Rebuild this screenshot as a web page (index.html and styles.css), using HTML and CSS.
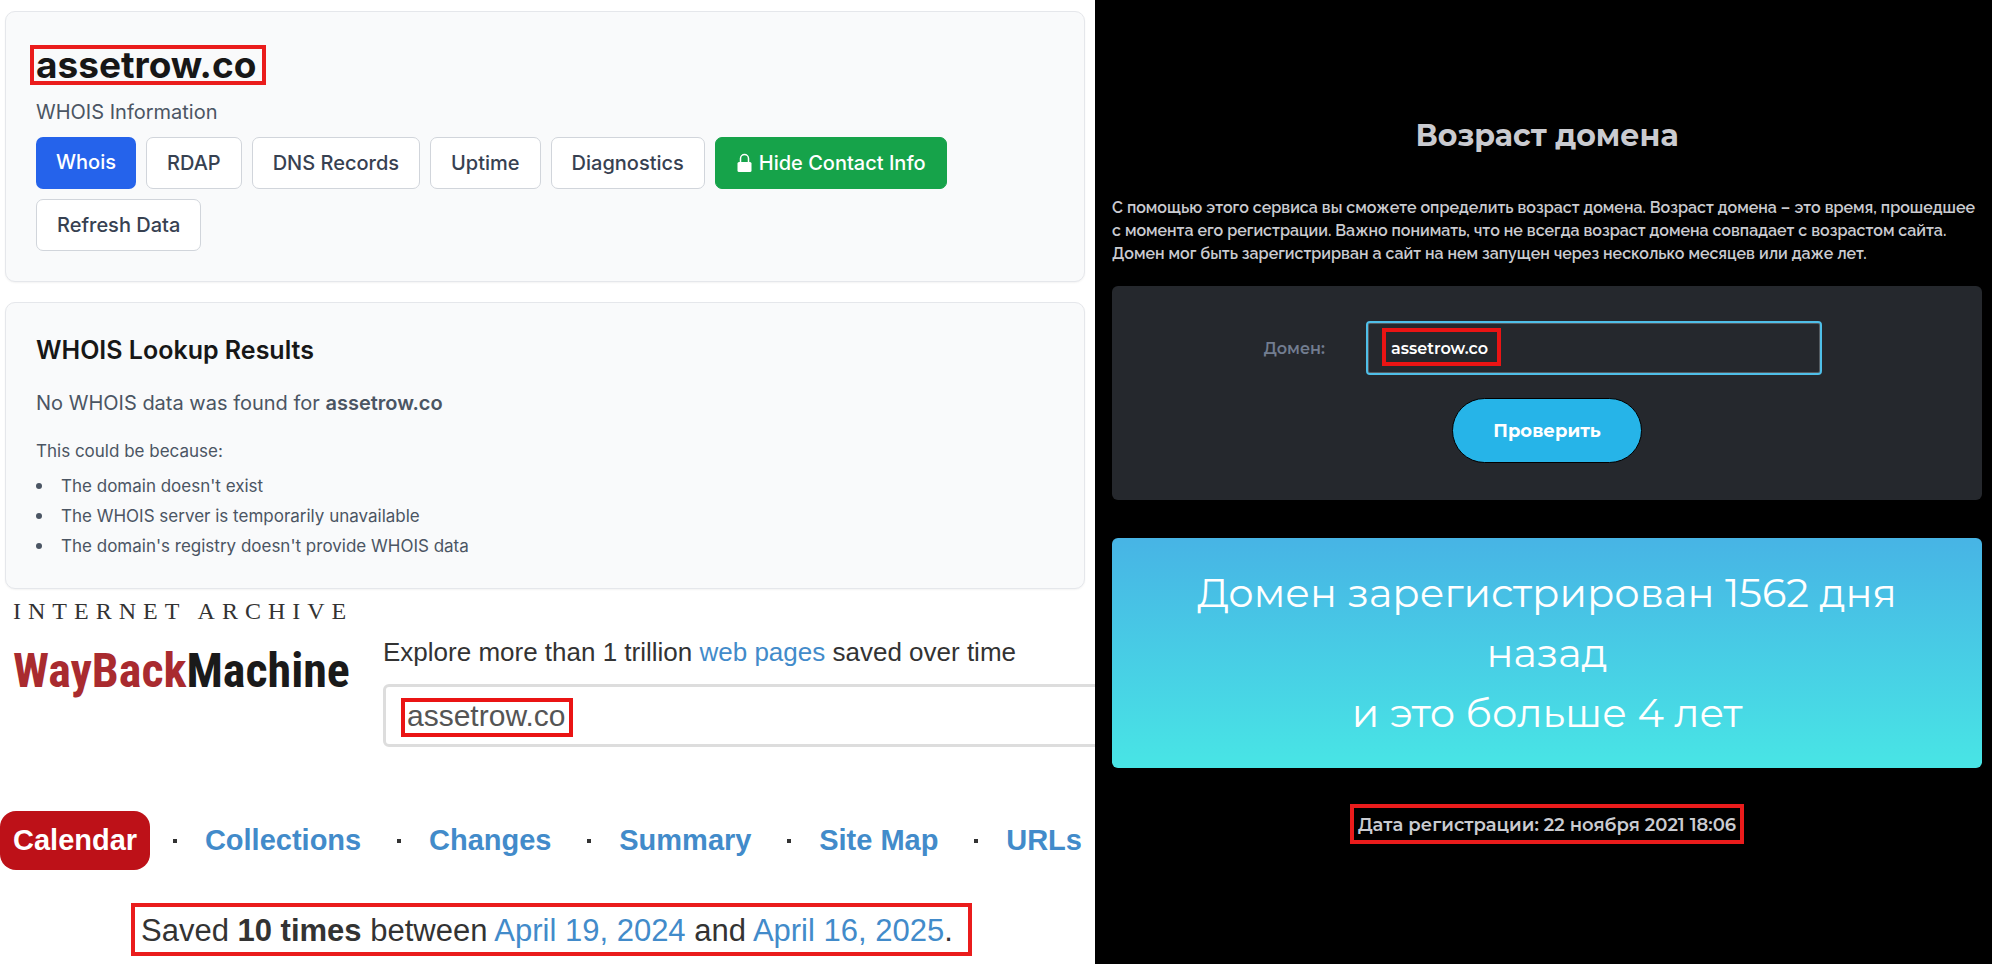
FILE: index.html
```html
<!DOCTYPE html>
<html lang="en">
<head>
<meta charset="utf-8">
<title>assetrow.co</title>
<link rel="stylesheet" href="styles.css">
</head>
<body>
<div class="board">
  <main class="left">
    <section class="card">
      <h1 class="domain"><span class="mark">assetrow.co</span></h1>
      <p class="subtitle">WHOIS Information</p>
      <div class="actions">
        <button class="btn btn-primary" type="button">Whois</button>
        <button class="btn" type="button">RDAP</button>
        <button class="btn" type="button">DNS Records</button>
        <button class="btn" type="button">Uptime</button>
        <button class="btn" type="button">Diagnostics</button>
        <button class="btn btn-success" type="button"><svg class="lock" viewBox="0 0 16 20" aria-hidden="true"><rect x="1" y="9" width="14" height="10" rx="1.5" fill="currentColor"/><path d="M4 10V5.500a4 4 0 0 1 8 0V10" fill="none" stroke="currentColor" stroke-width="1.500"/></svg>Hide Contact Info</button>
        <button class="btn" type="button">Refresh Data</button>
      </div>
    </section>
    <section class="card results">
      <h2 class="results-title">WHOIS Lookup Results</h2>
      <p class="results-lead">No WHOIS data was found for <strong>assetrow.co</strong></p>
      <p class="results-note">This could be because:</p>
      <ul class="reasons">
        <li>The domain doesn't exist</li>
        <li>The WHOIS server is temporarily unavailable</li>
        <li>The domain's registry doesn't provide WHOIS data</li>
      </ul>
    </section>
    <section class="archive">
      <div class="archive-head">
        <div class="logo">
          <div class="logo-top">INTERNET ARCHIVE</div>
          <div class="logo-name"><span class="logo-red">WayBack</span>Machine</div>
        </div>
        <div class="search">
          <label class="search-label" for="url">Explore more than 1 trillion <a href="#">web pages</a> saved over time</label>
          <div class="search-field">
            <input class="search-input" id="url" type="text" value="assetrow.co">
            <span class="frame search-frame"></span>
          </div>
        </div>
      </div>
      <nav class="tabs">
        <a class="tab tab-active" href="#">Calendar</a><i class="dot"></i>
        <a class="tab" href="#">Collections</a><i class="dot"></i>
        <a class="tab" href="#">Changes</a><i class="dot"></i>
        <a class="tab" href="#">Summary</a><i class="dot"></i>
        <a class="tab" href="#">Site Map</a><i class="dot"></i>
        <a class="tab" href="#">URLs</a>
      </nav>
      <p class="saved">Saved <strong>10 times</strong> between <a href="#">April 19, 2024</a> and <a href="#">April 16, 2025</a>.</p>
    </section>
  </main>
  <section class="age" lang="ru">
    <h2 class="age-title">Возраст домена</h2>
    <p class="age-text">С помощью этого сервиса вы сможете определить возраст домена. Возраст домена – это время, прошедшее<br>с момента его регистрации. Важно понимать, что не всегда возраст домена совпадает с возрастом сайта.<br>Домен мог быть зарегистрирван а сайт на нем запущен через несколько месяцев или даже лет.</p>
    <form class="age-form">
      <div class="age-row">
        <label class="age-label" for="domain">Домен:</label>
        <div class="age-field">
          <input class="age-input" id="domain" type="text" value="assetrow.co">
          <span class="frame age-frame"></span>
        </div>
      </div>
      <button class="age-submit" type="button">Проверить</button>
    </form>
    <div class="banner">Домен зарегистрирован 1562 дня назад<br>и это больше 4 лет</div>
    <p class="reg-date">Дата регистрации: 22 ноября 2021 18:06</p>
  </section>
</div>
</body>
</html>
```

FILE: styles.css
```css
* { box-sizing: border-box; }
body { margin: 0; background: #fff; }
h1, h2, p, ul { margin: 0; padding: 0; }
a { color: #428bca; text-decoration: none; }
button, input { font: inherit; }

.board {
  display: grid;
  grid-template-columns: 1095fr 897fr;
  min-height: 100vh;
}

.left {
  min-width: 0;
  overflow: hidden;
  padding-top: 11px;
  font-family: Inter, "Liberation Sans", sans-serif;
}
.card {
  margin: 0 10px 20px 5px;
  padding: 33px 30px 30px;
  border: 1px solid #e5e7eb;
  border-radius: 10px;
  background: #f9fafb;
  box-shadow: 0 1px 2px rgba(0, 0, 0, 0.05);
}
.domain {
  display: flex;
  margin-left: -6px;
  color: #171717;
  font-size: 37px;
  font-weight: 700;
  line-height: 32px;
}
.mark { padding: 0 6px 0 2px; border: 4px solid #ea1c1c; }
.subtitle {
  margin-top: 12px;
  color: #4b5563;
  font-size: 20px;
  line-height: 30px;
}
.actions {
  display: flex;
  flex-wrap: wrap;
  gap: 10px;
  margin-top: 10px;
}
.btn {
  display: flex;
  align-items: center;
  height: 52px;
  padding: 0 20px;
  border: 1px solid #d1d5db;
  border-radius: 7px;
  background: #fff;
  color: #374151;
  font-size: 20px;
  font-weight: 500;
}
.btn-primary { padding-bottom: 2px; border: 0; background: #2563eb; color: #fff; }
.btn-success { gap: 6px; border-color: #16a34a; background: #16a34a; color: #fff; }
.lock { width: 17px; height: 20px; }

.results { margin-bottom: 0; padding: 30px 30px 27px; }
.results-title { color: #171717; font-size: 25px; font-weight: 600; line-height: 34px; }
.results-lead { margin-top: 21px; color: #4b5563; font-size: 20px; line-height: 30px; }
.results-lead strong { font-weight: 600; }
.results-note { margin-top: 20px; color: #4b5563; font-size: 17px; line-height: 26px; }
.reasons {
  margin-top: 7px;
  color: #4b5563;
  font-size: 17px;
  line-height: 30px;
  list-style: none;
}
.reasons li { display: flex; align-items: center; gap: 19px; }
.reasons li::before {
  content: "";
  width: 6px;
  height: 6px;
  border-radius: 50%;
  background: #4b5563;
}

.archive { font-family: "Liberation Sans", Arial, sans-serif; color: #333; }
.archive-head { display: flex; padding-left: 13px; }
.logo { flex: none; width: 370px; padding-top: 8px; }
.logo-top {
  color: #333;
  font-family: "Liberation Serif", serif;
  font-size: 24px;
  letter-spacing: 7px;
  line-height: 28px;
  white-space: nowrap;
}
.logo-name {
  color: #1a1a1a;
  font-family: "Roboto Condensed", "Liberation Sans Narrow", "Liberation Sans", sans-serif;
  font-size: 48px;
  font-weight: 700;
  line-height: 92px;
  white-space: nowrap;
}
.logo-red { color: #a92b2f; }
.search { flex: 1; padding-top: 47px; min-width: 0; }
.search-label { display: block; font-size: 26px; line-height: 32px; }
.search-field { position: relative; margin: 16px -8px 0 0; }
.search-input {
  width: 100%;
  height: 63px;
  padding: 0 21px;
  border: 3px solid #ddd;
  border-radius: 6px;
  background: #fff;
  color: #555;
  font-size: 30px;
}
.frame { position: absolute; border: 4px solid #ea1414; pointer-events: none; }
.search-frame { top: 14px; left: 18px; width: 172px; height: 39px; }
.tabs {
  display: flex;
  align-items: center;
  justify-content: space-between;
  margin-top: 64px;
  font-size: 29px;
  font-weight: 700;
  line-height: 59px;
}
.tab { padding: 0 13px; }
.tab-active { border-radius: 16px; background: #bd1118; color: #fff; }
.dot { width: 4px; height: 4px; margin-left: 8px; background: #333; }
.saved {
  width: fit-content;
  margin: 33px auto 0 131px;
  padding: 2px 15px 0 6px;
  border: 4px solid #ea1c1c;
  font-size: 31px;
  line-height: 43px;
  white-space: nowrap;
}

.age {
  min-width: 0;
  padding: 112px 10px 0 17px;
  background: #000;
  color: #cacbd0;
  font-family: Montserrat, Inter, sans-serif;
}
.age-title { font-size: 30px; font-weight: 700; line-height: 48px; text-align: center; }
.age-text {
  margin-top: 36px;
  font-family: Raleway, Inter, sans-serif;
  font-size: 16px;
  font-weight: 600;
  line-height: 23px;
  white-space: nowrap;
}
.age-form {
  display: flex;
  flex-direction: column;
  align-items: center;
  gap: 23px;
  margin-top: 21px;
  padding: 35px 0 37px;
  border-radius: 6px;
  background: #25282d;
}
.age-row {
  display: grid;
  grid-template-columns: 213fr 456fr 119fr;
  column-gap: 41px;
  align-items: center;
  width: 100%;
}
.age-label { color: #727d90; font-size: 16px; font-weight: 600; text-align: right; }
.age-field { position: relative; }
.age-input {
  display: block;
  width: 100%;
  height: 54px;
  padding: 0 23px;
  border: 2px solid #4fbfe8;
  border-radius: 4px;
  box-shadow: inset 0 0 0 1px #555b61;
  background: #25282d;
  color: #fff;
  font-size: 16px;
  font-weight: 600;
}
.age-frame { top: 7px; left: 16px; width: 119px; height: 38px; }
.age-submit {
  height: 65px;
  padding: 0 40px;
  border: 1px solid #000;
  border-radius: 33px;
  background: #26b4e8;
  color: #fff;
  font-size: 18px;
  font-weight: 700;
}
.banner {
  margin-top: 38px;
  padding: 25px 64px;
  border-radius: 6px;
  background: linear-gradient(#47b4e5, #48e5e5);
  color: #fff;
  font-size: 40px;
  line-height: 60px;
  text-align: center;
}
.reg-date {
  width: fit-content;
  margin: 36px auto 0;
  padding: 2px 4px 0;
  border: 4px solid #ea1c1c;
  font-size: 18px;
  font-weight: 600;
  line-height: 30px;
}
```
